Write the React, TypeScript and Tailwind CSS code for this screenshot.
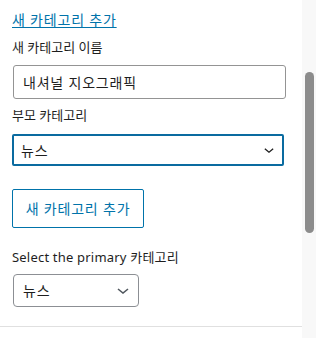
const font = { fontFamily: '"Noto Sans", "Noto Sans CJK KR", sans-serif' };

const Chevron = ({ className }: { className: string }) => (
  <svg viewBox="0 0 12 6" className={className} fill="none">
    <path d="M1 1 L6 5 L11 1" stroke="currentColor" strokeWidth="1.6" />
  </svg>
);

export default function App() {
  return (
    <div
      className="flex h-[338px] w-[316px] overflow-hidden bg-white text-[#1e1e1e]"
      style={font}
    >
      <div className="flex w-[302px] flex-col">
        <div className="flex flex-col pl-3">
          <a className="mt-[10px] w-fit text-[14px] leading-[20px] tracking-[0.8px] text-[#0073aa] underline underline-offset-2">
            새 카테고리 추가
          </a>
          <label className="mt-[7px] text-[13px] leading-[20px]">새 카테고리 이름</label>
          <div className="ml-px mt-[8px] flex h-[34px] w-[273px] items-center rounded-[3px] border border-[#949494] pl-[9px] text-[14px] tracking-[0.8px]">
            내셔널 지오그래픽
          </div>
          <label className="mt-[6px] text-[13px] leading-[20px]">부모 카테고리</label>
          <div className="mt-[9px] flex h-[32px] w-[272px] items-center justify-between rounded-[2px] border-2 border-[#0a6ba0] pl-[7px] pr-[8px] text-[14px] tracking-[0.8px]">
            <span>뉴스</span>
            <Chevron className="h-[5px] w-[10px] text-[#1e1e1e]" />
          </div>
          <button className="mt-[23px] flex h-[39px] w-[132px] items-center justify-center rounded-[2px] border border-[#0073aa] text-[14px] tracking-[0.8px] text-[#0073aa]">
            새 카테고리 추가
          </button>
          <label className="mt-[19px] text-[13px] leading-[20px] tracking-[0.2px]">Select the primary 카테고리</label>
          <div className="ml-px mt-[7px] flex h-[33px] w-[126px] items-center justify-between rounded-[4px] border border-[#8c8f94] pl-[9px] pr-[9px] text-[14px] tracking-[0.8px]">
            <span>뉴스</span>
            <Chevron className="h-[6px] w-[12px] text-[#50575e]" />
          </div>
        </div>
        <div className="mt-[19px] h-px w-full bg-[#e0e0e0]" />
      </div>
      <div className="w-[14px] bg-[#f8f8f8]">
        <div className="ml-[3px] mt-[72px] h-[161px] w-[9px] rounded-full bg-[#8c8c8c]" />
      </div>
    </div>
  );
}
